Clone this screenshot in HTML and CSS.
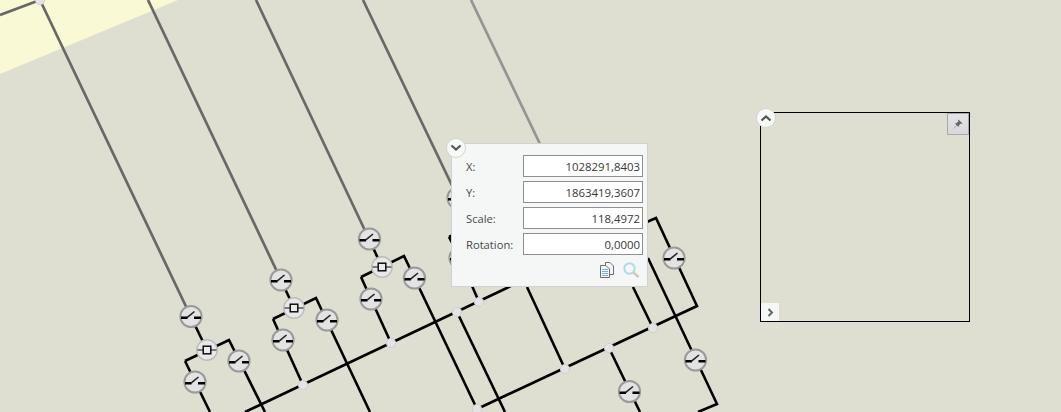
FILE: index.html
```html
<!DOCTYPE html>
<html lang="en">
<head>
    <meta charset="UTF-8">
    <meta name="viewport" content="width=device-width, initial-scale=1.0">
    <title>Map</title>
    <link rel="stylesheet" href="styles.css">
</head>
<body>
    <div class="map">
        <svg class="network" width="1061" height="412" viewBox="0 0 1061 412">
            <defs>
                <g id="switch">
                    <circle r="10.6" fill="#e3e3e3" stroke="#9a9a9a" stroke-width="2"/>
                    <path d="M-10 1.2H-3.5M3 1.2H10" fill="none" stroke="#000" stroke-width="2.4"/>
                    <path d="M-4 1.2L3.5 -5" fill="none" stroke="#222" stroke-width="1.6"/>
                </g>
                <g id="fuse">
                    <circle r="10.2" fill="#e8e8ea" stroke="#bcbcbc" stroke-width="1.4"/>
                    <path d="M-9.5 0H-4M4 0H9.5" stroke="#111" stroke-width="1.2"/>
                    <rect x="-3.8" y="-3.8" width="7.6" height="7.6" fill="#ececec" stroke="#000" stroke-width="1.4"/>
                </g>
                <circle id="node" r="4.6" fill="#e4e4e6" stroke="#cfcfcf" stroke-width="1"/>
            </defs>

            <polygon points="0,0 178,0 0,74" fill="#f9f9d5"/>

            <!-- feeders -->
            <g fill="none" stroke="#686868" stroke-width="2.7">
                <path d="M0 15L40 0L191 317"/>
                <path d="M148 0L281 280"/>
                <path d="M256 0L369 239"/>
                <path d="M363 0L458 198"/>
            </g>
            <path d="M471 0L540 144" fill="none" stroke="#949494" stroke-width="2.7"/>

            <!-- black wiring -->
            <g fill="none" stroke="#000" stroke-width="2.6">
                <path d="M191 317L207 350M185 361L229 340L265 412M185 361L210 412"/>
                <path d="M281 280L294 308M273 319L316 298L370 412M273 319L303 385"/>
                <path d="M369 239L382 267M361 277L404 256L477 409M361 277L391 343"/>
                <path d="M449 237L460 258L479 302M449 237L471 226M527 287L565 369"/>
                <path d="M245 412L530 277M457 312L505 412"/>
                <path d="M477 409L697 306L656 218L640 225"/>
                <path d="M633 287L653 328M648 258L717 404L698 412M609 348L640 412"/>
            </g>

            <use href="#node" x="40" y="0"/>
            <use href="#node" x="303" y="385"/>
            <use href="#node" x="391" y="343"/>
            <use href="#node" x="457" y="312"/>
            <use href="#node" x="479" y="302"/>
            <use href="#node" x="477" y="409"/>
            <use href="#node" x="565" y="369"/>
            <use href="#node" x="609" y="348"/>
            <use href="#node" x="653" y="328"/>

            <use href="#switch" x="191" y="316.5"/>
            <use href="#fuse" x="207" y="350"/>
            <use href="#switch" x="239" y="361"/>
            <use href="#switch" x="195" y="382"/>
            <use href="#switch" x="281" y="280"/>
            <use href="#fuse" x="294" y="308"/>
            <use href="#switch" x="327" y="320"/>
            <use href="#switch" x="283" y="340"/>
            <use href="#switch" x="369.5" y="239"/>
            <use href="#fuse" x="382" y="267"/>
            <use href="#switch" x="414.5" y="278"/>
            <use href="#switch" x="371" y="299"/>
            <use href="#switch" x="458" y="198"/>
            <use href="#switch" x="460" y="258"/>
            <use href="#switch" x="674" y="258"/>
            <use href="#switch" x="695.5" y="360"/>
            <use href="#switch" x="629.5" y="391.5"/>
        </svg>

        <form class="coords">
            <button type="button" class="round-btn coords-toggle">
                <svg width="12" height="8" viewBox="0 0 12 8"><path d="M1.5 1.5L6 5.5L10.5 1.5" fill="none" stroke="#555" stroke-width="2.2"/></svg>
            </button>
            <div class="coord-row">
                <label for="coordX">X:</label>
                <input type="text" id="coordX" value="1028291,8403">
            </div>
            <div class="coord-row">
                <label for="coordY">Y:</label>
                <input type="text" id="coordY" value="1863419,3607">
            </div>
            <div class="coord-row">
                <label for="coordScale">Scale:</label>
                <input type="text" id="coordScale" value="118,4972">
            </div>
            <div class="coord-row">
                <label for="coordRotation">Rotation:</label>
                <input type="text" id="coordRotation" value="0,0000">
            </div>
            <div class="coord-tools">
                <svg width="14" height="16" viewBox="0 0 14 16">
                    <path d="M5.5 3.5V0.5H10L13.5 4V12.5H9.5" fill="#f5f7f7" stroke="#6e6e6e"/>
                    <path d="M0.5 3.5H6L9.5 7V15.5H0.5Z" fill="#f5f7f7" stroke="#6e6e6e"/>
                    <path d="M2 7.5H8M2 9.5H8M2 11.5H8M2 13.5H8" stroke="#6fb3e0"/>
                </svg>
                <svg width="17" height="16" viewBox="0 0 17 16">
                    <circle cx="6.5" cy="6.5" r="5.2" fill="#f2f8fb" stroke="#b3d8ee" stroke-width="2"/>
                    <path d="M10.5 10.5L15.5 15" stroke="#d9c6b0" stroke-width="2.4"/>
                </svg>
            </div>
        </form>

        <div class="viewer">
            <button type="button" class="round-btn viewer-toggle">
                <svg width="12" height="8" viewBox="0 0 12 8"><path d="M1.5 6.5L6 2.5L10.5 6.5" fill="none" stroke="#555" stroke-width="2.2"/></svg>
            </button>
            <button type="button" class="pin-btn">
                <svg width="10" height="10" viewBox="0 0 10 10">
                    <path d="M0.5 9.5L4 6" stroke="#aaa" stroke-width="1"/>
                    <path d="M5.5 0.5L9.5 4.5L8.5 5L7.5 4.5L6 6.5L5.5 8L2 4.5L3.5 4L5.5 2.5L5 1.5Z" fill="#666"/>
                </svg>
            </button>
            <button type="button" class="expand-btn">
                <svg width="7" height="9" viewBox="0 0 7 9"><path d="M1.5 1L5 4.5L1.5 8" fill="none" stroke="#666" stroke-width="2"/></svg>
            </button>
        </div>
    </div>
</body>
</html>
```

FILE: styles.css
```css
* {
    box-sizing: border-box;
}
html, body {
    height: 100%;
}
body {
    margin: 0;
    font-family: "Open Sans", "Noto Sans", sans-serif;
    background-color: #dedfd1;
    overflow: hidden;
}
.map {
    position: relative;
    width: 100%;
    height: 100%;
}
.network {
    display: block;
}
button {
    padding: 0;
    display: flex;
    align-items: center;
    justify-content: center;
    cursor: pointer;
}
.round-btn {
    position: absolute;
    width: 20px;
    height: 20px;
    background: #f8f9f9;
    border: 1px solid #d2d4cc;
    border-radius: 50%;
}
.coords {
    position: absolute;
    top: 143px;
    left: 451px;
    width: 197px;
    height: 144px;
    padding: 11px 4px 0 14px;
    background: #f5f7f7;
    border: 1px solid #cfd2d0;
    display: flex;
    flex-direction: column;
    gap: 4px;
}
.coords-toggle {
    top: -6px;
    left: -6px;
}
.coord-row {
    display: flex;
    align-items: center;
    justify-content: space-between;
    height: 22px;
}
.coord-row label {
    font-size: 11.2px;
    color: #484848;
}
.coord-row input {
    width: 120px;
    height: 22px;
    padding: 0 2px 0 0;
    border: 1px solid #8f8f8f;
    background: #fff;
    color: #383838;
    font-family: inherit;
    font-size: 11.4px;
    text-align: right;
}
.coord-tools {
    display: flex;
    justify-content: flex-end;
    align-items: center;
    gap: 9px;
    padding: 3px 3px 0 0;
}
.viewer {
    position: absolute;
    top: 112px;
    left: 760px;
    width: 210px;
    height: 210px;
    border: 1px solid #000;
}
.viewer-toggle {
    top: -5px;
    left: -5px;
}
.pin-btn {
    position: absolute;
    top: 0;
    right: 0;
    width: 22px;
    height: 22px;
    background: linear-gradient(#e4e4e6, #d8d8da);
    border: 1px solid #a9a9ab;
}
.expand-btn {
    position: absolute;
    left: 0;
    bottom: 0;
    width: 18px;
    height: 18px;
    background: #f5f7f7;
    border: none;
}
```
